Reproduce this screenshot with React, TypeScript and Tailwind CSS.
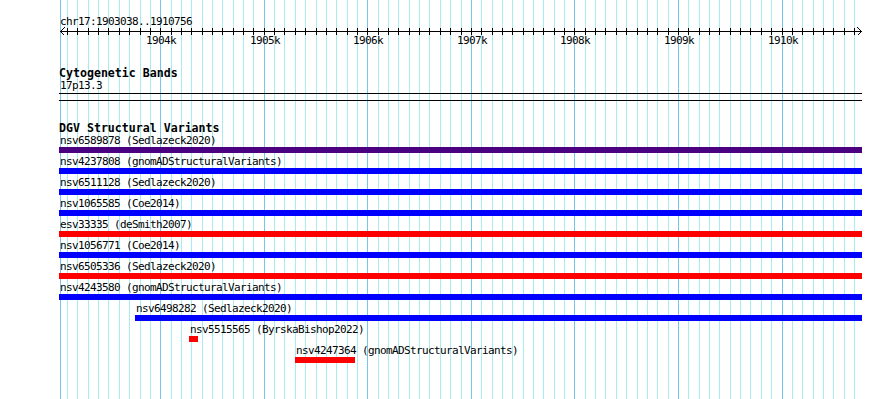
import React from "react";

const START = 1903038;
const SCALE = 0.10355;
const X0 = 60.6;
const px = (bp: number) => X0 + (bp - START) * SCALE;

const minor: number[] = [];
const major: number[] = [];
for (let b = 1903100; b <= 1910700; b += 100) {
  if (b % 1000 === 0) major.push(b);
  else minor.push(b);
}

type Row = { label: string; color: string; left: number; width: number };
const FULL = 803;
const rows: Row[] = [
  { label: "nsv6589878 (Sedlazeck2020)", color: "bg-[#4b0082]", left: 0, width: FULL },
  { label: "nsv4237808 (gnomADStructuralVariants)", color: "bg-[#0000ff]", left: 0, width: FULL },
  { label: "nsv6511128 (Sedlazeck2020)", color: "bg-[#0000ff]", left: 0, width: FULL },
  { label: "nsv1065585 (Coe2014)", color: "bg-[#0000ff]", left: 0, width: FULL },
  { label: "esv33335 (deSmith2007)", color: "bg-[#ff0000]", left: 0, width: FULL },
  { label: "nsv1056771 (Coe2014)", color: "bg-[#0000ff]", left: 0, width: FULL },
  { label: "nsv6505336 (Sedlazeck2020)", color: "bg-[#ff0000]", left: 0, width: FULL },
  { label: "nsv4243580 (gnomADStructuralVariants)", color: "bg-[#0000ff]", left: 0, width: FULL },
  { label: "nsv6498282 (Sedlazeck2020)", color: "bg-[#0000ff]", left: 76, width: 727 },
  { label: "nsv5515565 (ByrskaBishop2022)", color: "bg-[#ff0000]", left: 130, width: 9 },
  { label: "nsv4247364 (gnomADStructuralVariants)", color: "bg-[#ff0000]", left: 236, width: 60 },
];

const mono = "font-['DejaVu_Sans_Mono','Liberation_Mono',monospace] text-[11px] leading-[11px] tracking-[-0.62px] text-black whitespace-nowrap";
const bold = "font-['DejaVu_Sans_Mono','Liberation_Mono',monospace] text-[11.6px] leading-[12px] font-bold text-black whitespace-nowrap";

export default function App() {
  return (
    <div className="relative w-[890px] h-[399px] bg-white overflow-hidden">
      <svg className="absolute inset-0" width={890} height={399} shapeRendering="crispEdges">
        <rect x={60} y={0} width={1} height={399} fill="#74c6ee" />
        {minor.map((b) => (
          <rect key={b} x={Math.round(px(b))} y={0} width={1} height={399} fill="#a8ecf0" />
        ))}
        {major.map((b) => (
          <rect key={b} x={Math.round(px(b))} y={0} width={1} height={399} fill="#74c6ee" />
        ))}
        {/* axis */}
        <rect x={60} y={31} width={802} height={1} fill="#000" />
        {[...minor, ...major].map((b) => (
          <rect key={"t" + b} x={Math.round(px(b))} y={28} width={1} height={7} fill="#000" />
        ))}
        <g stroke="#000" strokeWidth={1} fill="none" shapeRendering="crispEdges">
          <path d="M64.5 27.5 L60.5 31.5 L64.5 35.5" />
          <path d="M857.5 27.5 L861.5 31.5 L857.5 35.5" />
        </g>
      </svg>

      <div className="relative pt-[16px] pl-[59px] w-[862px]">
        <div className={`${mono} h-[11px] pl-[1px]`}>chr17:1903038..1910756</div>
        <div className="relative h-[11px] mt-[8px]">
          {major.map((b) => (
            <div
              key={b}
              className={`${mono} absolute top-0 w-[40px] text-center`}
              style={{ left: Math.round(px(b)) - 59 - 20 + 1 }}
            >
              {`${b / 1000}k`}
            </div>
          ))}
        </div>
        <div className={`${bold} h-[12px] mt-[21px]`}>Cytogenetic Bands</div>
        <div className={`${mono} h-[11px] mt-[1px] pl-[1px]`}>17p13.3</div>
        <div className="h-px bg-black mt-[2px]" />
        <div className="h-px bg-black mt-[6px]" />
        <div className={`${bold} h-[12px] mt-[21px]`}>DGV Structural Variants</div>
        <div className="mt-[1px] flex flex-col">
          {rows.map((r) => (
            <div key={r.label} className="h-[21px]">
              <div className={`${mono} h-[11px] pl-[1px]`} style={{ marginLeft: r.left }}>
                {r.label}
              </div>
              <div
                className={`${r.color} h-[6px] mt-[1px]`}
                style={{ marginLeft: r.left, width: r.width }}
              />
            </div>
          ))}
        </div>
      </div>
    </div>
  );
}
